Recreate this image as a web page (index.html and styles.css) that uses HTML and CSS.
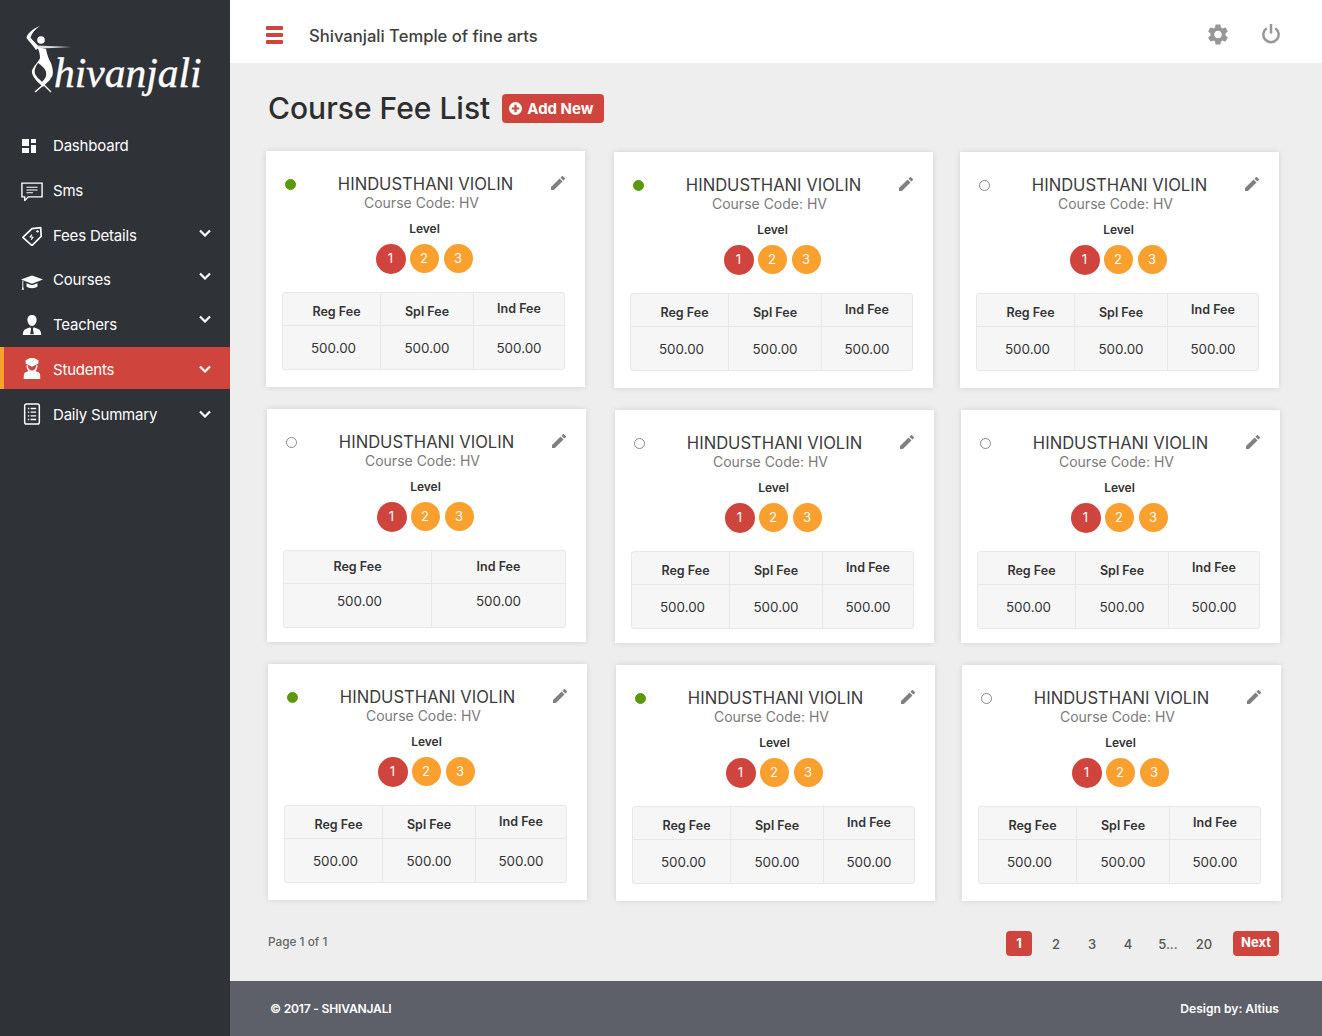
FILE: index.html
```html
<!DOCTYPE html>
<html lang="en">
<head>
  <meta charset="UTF-8" />
  <title>Course Fee List</title>
  <link rel="stylesheet" href="styles.css">
</head>
<body>
  <svg class="defs" width="0" height="0">
    <symbol id="pencil" viewBox="3 3 18 18"><path d="M3 17.25V21h3.75L17.81 9.94l-3.75-3.75L3 17.25zM20.71 7.04c.39-.39.39-1.02 0-1.41l-2.34-2.34c-.39-.39-1.02-.39-1.41 0l-1.83 1.83 3.75 3.75 1.83-1.83z"/></symbol>
    <symbol id="chev" viewBox="0 0 12 8"><path d="M1 1.5l5 5 5-5" fill="none" stroke="currentColor" stroke-width="2.2"/></symbol>
  </svg>

  <div class="app">
    <aside class="sidebar">
      <div class="logo">
        <svg class="dancer" viewBox="0 0 50 70" width="50" height="70">
          <circle cx="16" cy="15" r="3.8" fill="#fff"/>
          <path d="M15 1C7 4 2 9 1.500 13c3 4 7 8 9.500 12l3-3C11 18 7 15 5.500 12.500 7 8 10 4 15 1z" fill="#fff"/>
          <path d="M12 20.500l34 1.500-34 1.800z" fill="#ddd"/>
          <path d="M12 22l9 2c1 5 2 9 5 14 2 6 3 12 0 15-2 3-6 6-8 9-4-4-10-9-11-14-1-5 6-10 8-15 0-4-1-8-3-11zM13 38c-3 4-4 8-3 11 2 3 4 6 7 8 3-3 5-6 4-10-1-4-4-6-8-9z" fill="#fff"/>
          <path d="M10 67l15-13M26 67L13 54" stroke="#fff" stroke-width="1.400" fill="none"/>
        </svg>
        <span class="logo-text">hivanjali</span>
      </div>
      <ul class="menu">
        <li class="menu-item">
          <svg class="ico" viewBox="0 0 22 22"><path d="M1 4h7v7H1zM1 13h7v5H1zM10 4h5v4h-5zM10 10h5v8h-5z"/></svg>
          <span>Dashboard</span>
        </li>
        <li class="menu-item">
          <svg class="ico" viewBox="0 -1.500 24 24"><path d="M1 3h22v15H8l-4 4v-4H1z" fill="none" stroke="#fff" stroke-width="1.500"/><path d="M6 7.500h12M6 10.500h12M6 13.500h7" stroke="#fff" stroke-width="1.300"/></svg>
          <span>Sms</span>
        </li>
        <li class="menu-item">
          <svg class="ico" viewBox="0 -1.500 24 24"><path d="M2 13L12 3.500l9.500-1 .5 9.500-10 10z" fill="none" stroke="#fff" stroke-width="1.800" stroke-linejoin="round"/><circle cx="18" cy="6.500" r="1.300"/><path d="M12 10l-2 2.500 3 .5-2 2.500" fill="none" stroke="#fff" stroke-width="1.200"/></svg>
          <span>Fees Details</span>
          <svg class="chev up2"><use href="#chev"/></svg>
        </li>
        <li class="menu-item">
          <svg class="ico" viewBox="0 -2 24 24"><path d="M0 9.500L12 5l12 4.500-12 4.500z"/><path d="M6 13.500l6 2.300 6-2.300v3.500c-3 2.500-9 2.500-12 0zM1.500 10.500h1v7l.8 3H.7l.8-3z"/></svg>
          <span>Courses</span>
          <svg class="chev up4"><use href="#chev"/></svg>
        </li>
        <li class="menu-item">
          <svg class="ico" viewBox="0 0 24 24"><path d="M12 1c3.500 0 5 2.500 5 5.500S15 13 12 13 7 9.500 7 6.500 8.500 1 12 1z"/><path d="M2 23c0-4 1-6 4-7l4-1.500 1 1.500-1 6h4l-1-6 1-1.500 4 1.500c3 1 4 3 4 7z"/></svg>
          <span>Teachers</span>
          <svg class="chev up6"><use href="#chev"/></svg>
        </li>
        <li class="menu-item active">
          <svg class="ico" viewBox="0 1 24 24"><path d="M12 0l7 3.500v3.500l-7 3.500L5 7V3.500z"/><path d="M7 8c1 5 2.500 6.500 5 6.500S16 13 17 8l1 1c0 3-1 5-2 6.500l3 1c2 1 2 3 2 7.500H3c0-4.500 0-6.500 2-7.500l3-1C7 14 6 12 6 9z"/></svg>
          <span>Students</span>
          <svg class="chev"><use href="#chev"/></svg>
        </li>
        <li class="menu-item">
          <svg class="ico" viewBox="0 0 24 24"><rect x="4" y="1" width="16" height="22" rx="2" fill="none" stroke="#fff" stroke-width="1.600"/><path d="M7.500 6h1.500M7.500 10h1.500M7.500 14h1.500M7.500 18h1.500M10.500 6h6M10.500 10h6M10.500 14h6M10.500 18h6" stroke="#fff" stroke-width="1.500"/></svg>
          <span>Daily Summary</span>
          <svg class="chev"><use href="#chev"/></svg>
        </li>
      </ul>
    </aside>

    <div class="main">
      <header class="topbar">
        <div class="burger"><i></i><i></i><i></i></div>
        <div class="topbar-title">Shivanjali Temple of fine arts</div>
        <svg class="top-ico gear" viewBox="2.500 2 19 20"><path d="M19.140 12.940c.04-.3.06-.61.06-.94 0-.32-.02-.64-.07-.94l2.030-1.580c.18-.14.23-.41.12-.61l-1.920-3.320c-.12-.22-.37-.29-.59-.22l-2.390.96c-.5-.38-1.030-.7-1.620-.94l-.36-2.540c-.04-.24-.24-.41-.48-.41h-3.840c-.24 0-.43.17-.47.41l-.36 2.540c-.59.24-1.130.57-1.620.94l-2.390-.96c-.22-.08-.47 0-.59.22L2.740 8.870c-.12.21-.08.47.12.61l2.030 1.580c-.05.3-.09.63-.09.94s.02.64.07.94l-2.030 1.580c-.18.14-.23.41-.12.61l1.920 3.320c.12.22.37.29.59.22l2.390-.96c.5.38 1.030.7 1.620.94l.36 2.540c.05.24.24.41.48.41h3.840c.24 0 .44-.17.47-.41l.36-2.540c.59-.24 1.130-.56 1.620-.94l2.390.96c.22.08.47 0 .59-.22l1.920-3.320c.12-.22.07-.47-.12-.61l-2.010-1.580zM12 15.600c-1.980 0-3.600-1.620-3.600-3.600s1.620-3.600 3.600-3.600 3.600 1.620 3.600 3.600-1.620 3.600-3.600 3.600z"/></svg>
        <svg class="top-ico power" viewBox="0 0 20 22"><path d="M5.500 5.500a8 8 0 1 0 9 0M10 1v10" fill="none" stroke="#979797" stroke-width="2.600"/></svg>
      </header>

      <section class="content">
        <div class="page-head">
          <h1>Course Fee List</h1>
          <a class="add-btn">
            <svg viewBox="0 0 14 14" width="13" height="13"><path fill-rule="evenodd" d="M7 0a7 7 0 1 1 0 14A7 7 0 0 1 7 0zM5.800 3v2.800H3v2.400h2.800V11h2.400V8.200H11V5.800H8.200V3z" fill="#fff"/></svg>
            Add New
          </a>
        </div>

        <div class="card-row row-a">
          <article class="card">
            <div class="card-head"><span class="dot on"></span><h3>HINDUSTHANI VIOLIN</h3><svg class="pencil"><use href="#pencil"/></svg></div>
            <p class="code">Course Code: HV</p>
            <p class="level">Level</p>
            <div class="levels"><b class="first">1</b><b>2</b><b>3</b></div>
            <table class="fees"><tr><th>Reg Fee</th><th>Spl Fee</th><th class="ind">Ind Fee</th></tr><tr><td>500.00</td><td>500.00</td><td>500.00</td></tr></table>
          </article>
          <article class="card">
            <div class="card-head"><span class="dot on"></span><h3>HINDUSTHANI VIOLIN</h3><svg class="pencil"><use href="#pencil"/></svg></div>
            <p class="code">Course Code: HV</p>
            <p class="level">Level</p>
            <div class="levels"><b class="first">1</b><b>2</b><b>3</b></div>
            <table class="fees"><tr><th>Reg Fee</th><th>Spl Fee</th><th class="ind">Ind Fee</th></tr><tr><td>500.00</td><td>500.00</td><td>500.00</td></tr></table>
          </article>
          <article class="card">
            <div class="card-head"><span class="dot"></span><h3>HINDUSTHANI VIOLIN</h3><svg class="pencil"><use href="#pencil"/></svg></div>
            <p class="code">Course Code: HV</p>
            <p class="level">Level</p>
            <div class="levels"><b class="first">1</b><b>2</b><b>3</b></div>
            <table class="fees"><tr><th>Reg Fee</th><th>Spl Fee</th><th class="ind">Ind Fee</th></tr><tr><td>500.00</td><td>500.00</td><td>500.00</td></tr></table>
          </article>
        </div>

        <div class="card-row row-b">
          <article class="card">
            <div class="card-head"><span class="dot"></span><h3>HINDUSTHANI VIOLIN</h3><svg class="pencil"><use href="#pencil"/></svg></div>
            <p class="code">Course Code: HV</p>
            <p class="level">Level</p>
            <div class="levels"><b class="first">1</b><b>2</b><b>3</b></div>
            <table class="fees two"><tr><th>Reg Fee</th><th>Ind Fee</th></tr><tr><td>500.00</td><td>500.00</td></tr></table>
          </article>
          <article class="card">
            <div class="card-head"><span class="dot"></span><h3>HINDUSTHANI VIOLIN</h3><svg class="pencil"><use href="#pencil"/></svg></div>
            <p class="code">Course Code: HV</p>
            <p class="level">Level</p>
            <div class="levels"><b class="first">1</b><b>2</b><b>3</b></div>
            <table class="fees"><tr><th>Reg Fee</th><th>Spl Fee</th><th class="ind">Ind Fee</th></tr><tr><td>500.00</td><td>500.00</td><td>500.00</td></tr></table>
          </article>
          <article class="card">
            <div class="card-head"><span class="dot"></span><h3>HINDUSTHANI VIOLIN</h3><svg class="pencil"><use href="#pencil"/></svg></div>
            <p class="code">Course Code: HV</p>
            <p class="level">Level</p>
            <div class="levels"><b class="first">1</b><b>2</b><b>3</b></div>
            <table class="fees"><tr><th>Reg Fee</th><th>Spl Fee</th><th class="ind">Ind Fee</th></tr><tr><td>500.00</td><td>500.00</td><td>500.00</td></tr></table>
          </article>
        </div>

        <div class="card-row row-c">
          <article class="card">
            <div class="card-head"><span class="dot on"></span><h3>HINDUSTHANI VIOLIN</h3><svg class="pencil"><use href="#pencil"/></svg></div>
            <p class="code">Course Code: HV</p>
            <p class="level">Level</p>
            <div class="levels"><b class="first">1</b><b>2</b><b>3</b></div>
            <table class="fees"><tr><th>Reg Fee</th><th>Spl Fee</th><th class="ind">Ind Fee</th></tr><tr><td>500.00</td><td>500.00</td><td>500.00</td></tr></table>
          </article>
          <article class="card">
            <div class="card-head"><span class="dot on"></span><h3>HINDUSTHANI VIOLIN</h3><svg class="pencil"><use href="#pencil"/></svg></div>
            <p class="code">Course Code: HV</p>
            <p class="level">Level</p>
            <div class="levels"><b class="first">1</b><b>2</b><b>3</b></div>
            <table class="fees"><tr><th>Reg Fee</th><th>Spl Fee</th><th class="ind">Ind Fee</th></tr><tr><td>500.00</td><td>500.00</td><td>500.00</td></tr></table>
          </article>
          <article class="card">
            <div class="card-head"><span class="dot"></span><h3>HINDUSTHANI VIOLIN</h3><svg class="pencil"><use href="#pencil"/></svg></div>
            <p class="code">Course Code: HV</p>
            <p class="level">Level</p>
            <div class="levels"><b class="first">1</b><b>2</b><b>3</b></div>
            <table class="fees"><tr><th>Reg Fee</th><th>Spl Fee</th><th class="ind">Ind Fee</th></tr><tr><td>500.00</td><td>500.00</td><td>500.00</td></tr></table>
          </article>
        </div>

        <div class="pager-row">
          <span class="page-info">Page 1 of 1</span>
          <div class="pager">
            <a class="pg current">1</a>
            <a class="pg">2</a>
            <a class="pg">3</a>
            <a class="pg">4</a>
            <a class="pg more">5...</a>
            <a class="pg">20</a>
            <a class="next">Next</a>
          </div>
        </div>
      </section>

      <footer class="footer">
        <span class="copy">© 2017 - SHIVANJALI</span>
        <span>Design by: Altius</span>
      </footer>
    </div>
  </div>
</body>
</html>
```
FILE: styles.css
```css
* {
  box-sizing: border-box;
}
body {
  margin: 0;
  font-family: "Inter", "Open Sans", sans-serif;
  background: #eeeeee;
  color: #333;
}
.defs {
  position: absolute;
}
.app {
  display: flex;
  min-height: 100vh;
}

/* sidebar */
.sidebar {
  width: 230px;
  flex: none;
  background: #2f3237;
  color: #fff;
}
.logo {
  display: flex;
  align-items: flex-start;
  height: 123px;
  padding: 25px 0 0 25px;
}
.dancer {
  flex: none;
  margin-right: -21px;
}
.logo-text {
  font-family: "Liberation Serif", serif;
  font-style: italic;
  font-size: 41.500px;
  line-height: 50px;
  margin-top: 23px;
  -webkit-text-stroke: 0.4px #fff;
}
.menu {
  list-style: none;
  margin: 0;
  padding: 0;
  display: flex;
  flex-direction: column;
  gap: 2.750px;
}
.menu-item {
  display: flex;
  align-items: center;
  height: 42px;
  padding: 3px 19px 0 21px;
  font-size: 15px;
  letter-spacing: -0.200px;
}
.menu-item span {
  flex: 1;
  margin-left: 10px;
}
.menu-item.active {
  background: #cf453d;
  border-left: 4px solid #f9a02e;
  padding-left: 17px;
}
.ico {
  width: 22px;
  height: 22px;
  flex: none;
  fill: #fff;
}
.chev {
  width: 12px;
  height: 8px;
  color: #fff;
}
.up2 {
  margin-bottom: 4px;
}
.up4 {
  margin-bottom: 8px;
}
.up6 {
  margin-bottom: 12px;
}

/* top bar */
.main {
  flex: 1;
  display: flex;
  flex-direction: column;
  min-width: 0;
}
.topbar {
  height: 63px;
  background: #fff;
  display: flex;
  align-items: center;
  padding: 6px 41px 0 36px;
}
.burger {
  width: 17px;
  display: flex;
  flex-direction: column;
  gap: 3px;
  margin-right: 26px;
}
.burger i {
  height: 4px;
  border-radius: 1px;
  background: #cf453d;
}
.topbar-title {
  flex: 1;
  font-size: 16.600px;
  font-weight: 500;
  color: #404040;
  margin-top: 2px;
}
.top-ico {
  width: 20px;
  height: 21px;
  margin-bottom: 1px;
}
.gear {
  fill: #979797;
  margin-right: 33px;
}
.power {
  margin-bottom: 3px;
}
.content {
  flex: 1;
  padding-top: 29px;
}
.page-head {
  display: flex;
  align-items: center;
  height: 32px;
  margin: 0 0 28px 38px;
}
h1 {
  margin: 0 12px 0 0;
  font-size: 30px;
  font-weight: 500;
  color: #2e2e2e;
}
.add-btn {
  display: flex;
  align-items: center;
  gap: 5px;
  height: 29px;
  width: 102px;
  padding-left: 7px;
  background: #cf453d;
  color: #fff;
  border-radius: 4px;
  font-size: 15px;
  font-weight: 700;
}

/* cards */
.card-row {
  display: flex;
  align-items: flex-start;
  margin-bottom: 22px;
}
.row-a {
  margin-left: 36px;
}
.row-b {
  margin-left: 37px;
}
.row-c {
  margin-left: 38px;
}
.card {
  width: 319px;
  background: #fff;
  padding: 24px 20px 17px 16px;
  box-shadow: 0 0 6px rgba(0, 0, 0, 0.12);
  text-align: center;
}
.card:first-child {
  margin-top: -1px;
}
.card:nth-child(2) {
  margin-left: 29px;
}
.card:nth-child(3) {
  margin-left: 27px;
}
.row-b .card {
  padding-bottom: 14px;
}
.card-head {
  display: flex;
  align-items: center;
  justify-content: space-between;
  height: 18px;
  padding: 0 0 0 3px;
}
.card-head h3 {
  margin: 0 0 0 4px;
  font-size: 16.600px;
  font-weight: 400;
  color: #3c3c3c;
}
.dot {
  width: 11px;
  height: 11px;
  border-radius: 50%;
  border: 1px solid #888;
  background: #fff;
}
.dot.on {
  background: #5a9a0a;
  border-color: #5a9a0a;
}
.pencil {
  width: 14px;
  height: 14px;
  fill: #808080;
  margin-bottom: 2px;
}
.code {
  margin: 2px 4px 0 0;
  font-size: 14px;
  line-height: 16px;
  color: #7b7b7b;
}
.level {
  margin: 10px 0 0 2px;
  font-size: 12px;
  line-height: 16px;
  font-weight: 600;
  color: #333;
}
.levels {
  display: flex;
  justify-content: center;
  gap: 5px;
  margin: 7px 0 18px;
  padding-left: 1px;
}
.levels b {
  width: 29px;
  height: 29px;
  line-height: 29px;
  border-radius: 50%;
  background: #f9a02e;
  color: #fff;
  font-size: 13px;
  font-weight: 400;
}
.levels .first {
  width: 30px;
  height: 30px;
  margin-right: -1px;
  background: #cf453d;
}
.fees {
  width: 283px;
  height: 78px;
  table-layout: fixed;
  border-collapse: separate;
  border-spacing: 0;
  background: #f6f6f6;
  border: 1px solid #e8e8e8;
  border-radius: 3px;
  font-size: 13px;
}
.fees th {
  height: 33px;
  font-weight: 600;
  font-size: 12.500px;
  border-bottom: 1px solid #e8e8e8;
  padding: 5px 0 0;
}
.fees td {
  padding: 0;
  font-size: 13.400px;
}
.fees th:first-child,
.fees td:first-child {
  width: 97px;
}
.fees th:nth-child(2) {
  width: 93px;
}
.fees tr:first-child th:first-child {
  padding-left: 10px;
}
.fees td:first-child {
  padding-left: 4px;
}
.fees th + th,
.fees td + td {
  border-left: 1px solid #e8e8e8;
}
.fees .ind {
  padding: 0 0 1px;
}
.fees.two th:first-child,
.fees.two td:first-child {
  width: 147px;
}
.fees.two th:nth-child(2) {
  width: auto;
}
.fees.two th,
.fees.two tr:first-child th:first-child {
  padding: 0 0 2px;
}
.fees.two td {
  padding: 0 0 10px;
}
.fees.two td:first-child {
  padding-left: 4px;
}

/* pager */
.pager-row {
  display: flex;
  justify-content: space-between;
  align-items: flex-start;
  margin: 30px 43px 0 38px;
}
.page-info {
  font-size: 11.800px;
  font-weight: 500;
  color: #666;
  margin-top: 4px;
}
.pager {
  display: flex;
  align-items: center;
  font-size: 13px;
  font-weight: 500;
  color: #555;
}
.pg {
  width: 36px;
  text-align: center;
}
.pg.current {
  width: 26px;
  height: 25px;
  line-height: 25px;
  margin-right: 6px;
  background: #cf453d;
  color: #fff;
  border-radius: 4px;
  font-weight: 700;
}
.pg.more {
  margin-left: 4px;
}
.next {
  width: 46px;
  height: 25px;
  line-height: 23px;
  margin-left: 11px;
  text-align: center;
  background: #cf453d;
  color: #fff;
  border-radius: 4px;
  font-weight: 700;
}

/* footer */
.footer {
  height: 55px;
  flex: none;
  background: #5d6068;
  color: #fff;
  display: flex;
  justify-content: space-between;
  align-items: center;
  padding: 0 43px 0 40px;
  font-size: 12.100px;
  font-weight: 600;
}
.copy {
  letter-spacing: -0.200px;
}
```
